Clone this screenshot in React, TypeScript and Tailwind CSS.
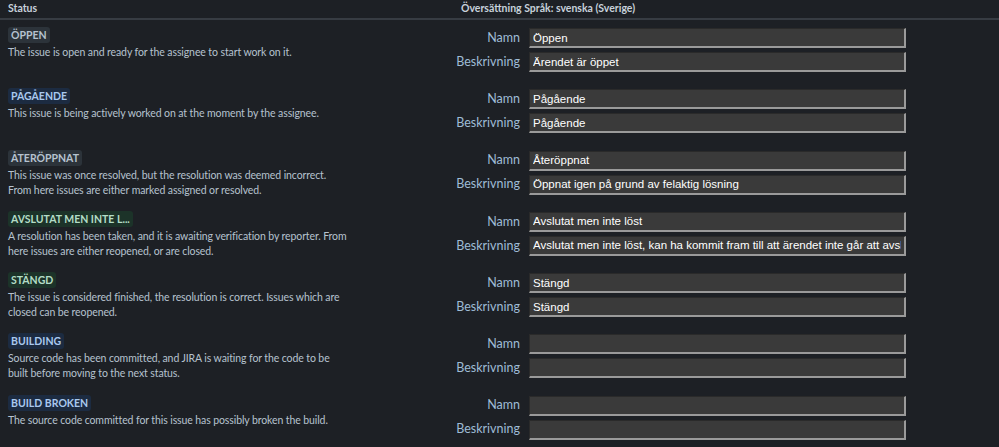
import React from 'react';

type Tone = 'gray' | 'blue' | 'green';

interface StatusRow {
  name: string;
  tone: Tone;
  desc: string[];
  svName: string;
  svDesc: string;
}

// description lines are split where the original wraps
const rows: StatusRow[] = [
  { name: 'ÖPPEN', tone: 'gray', desc: ['The issue is open and ready for the assignee to start work on it.'], svName: 'Öppen', svDesc: 'Ärendet är öppet' },
  { name: 'PÅGÅENDE', tone: 'blue', desc: ['This issue is being actively worked on at the moment by the assignee.'], svName: 'Pågående', svDesc: 'Pågående' },
  { name: 'ÅTERÖPPNAT', tone: 'gray', desc: ['This issue was once resolved, but the resolution was deemed incorrect.', 'From here issues are either marked assigned or resolved.'], svName: 'Återöppnat', svDesc: 'Öppnat igen på grund av felaktig lösning' },
  { name: 'AVSLUTAT MEN INTE L...', tone: 'green', desc: ['A resolution has been taken, and it is awaiting verification by reporter. From', 'here issues are either reopened, or are closed.'], svName: 'Avslutat men inte löst', svDesc: 'Avslutat men inte löst, kan ha kommit fram till att ärendet inte går att avslutas' },
  { name: 'STÄNGD', tone: 'green', desc: ['The issue is considered finished, the resolution is correct. Issues which are', 'closed can be reopened.'], svName: 'Stängd', svDesc: 'Stängd' },
  { name: 'BUILDING', tone: 'blue', desc: ['Source code has been committed, and JIRA is waiting for the code to be', 'built before moving to the next status.'], svName: '', svDesc: '' },
  { name: 'BUILD BROKEN', tone: 'blue', desc: ['The source code committed for this issue has possibly broken the build.'], svName: '', svDesc: '' },
];

const lozenge: Record<Tone, string> = {
  gray: 'bg-[#2c333a] text-[#b6c2cf]',
  blue: 'bg-[#1c2b41] text-[#a9c8ee]',
  green: 'bg-[#1c3329] text-[#b3dcc6]',
};

function Field({ label, value }: { label: string; value: string }) {
  return (
    <div className="flex items-center h-[24px]">
      <span className="w-[67px] text-right text-[12.5px] text-[#9fbcd6] whitespace-nowrap">{label}</span>
      <input
        readOnly
        value={value}
        className="ml-[9px] w-[377px] h-[20px] bg-[#3a3a3a] text-white text-[11.5px] px-[3px] border-t border-l border-[#2a2a2a] border-r-2 border-b-2 border-r-[#9a9a9a] border-b-[#9a9a9a] outline-none font-['Liberation_Sans',Arial,sans-serif]"
      />
    </div>
  );
}

export default function App() {
  return (
    <div className="w-[999px] h-[447px] overflow-hidden bg-[#1d2025] font-['Lato',sans-serif]">
      <div className="flex h-[20px] items-center border-b-2 border-[#373c43] text-[10.5px] font-bold text-[#c7d1db]">
        <div className="w-[453px] pl-[8px]">Status</div>
        <div className="pl-[8px]">Översättning Språk: svenska (Sverige)</div>
      </div>
      <div className="pt-[6px]">
        {rows.map((r) => (
          <div key={r.name} className="flex h-[61.3px]">
            <div className="w-[453px] pl-[8px] pt-px">
              <div className={`w-fit h-[16px] leading-[16px] px-[3px] rounded-[3px] text-[10.5px] font-bold ${lozenge[r.tone]}`}>{r.name}</div>
              <div className="mt-[2px] text-[10.5px] tracking-[-0.1px] leading-[15px] text-[#b6c2cf] whitespace-nowrap">
                {r.desc.map((line) => (
                  <p key={line}>{line}</p>
                ))}
              </div>
            </div>
            <div className="flex flex-col">
              <Field label="Namn" value={r.svName} />
              <Field label="Beskrivning" value={r.svDesc} />
            </div>
          </div>
        ))}
      </div>
    </div>
  );
}
